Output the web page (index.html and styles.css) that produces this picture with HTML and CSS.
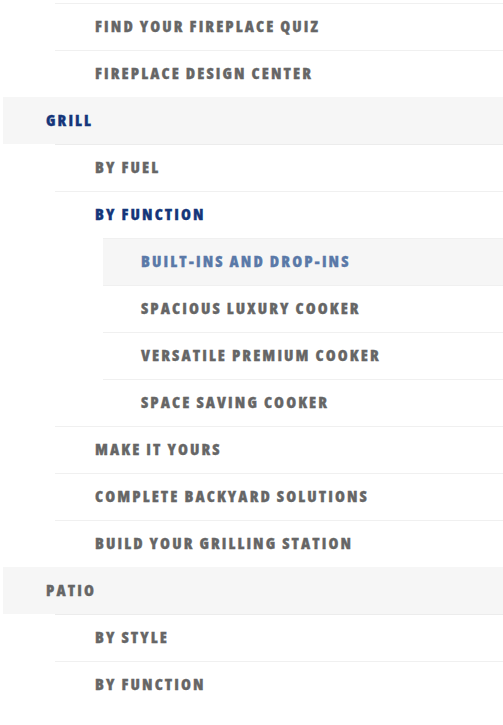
FILE: index.html
```html
<!DOCTYPE html>
<html>
<head>
<meta charset="utf-8">
<link rel="stylesheet" href="styles.css">
</head>
<body>
<nav class="menu">
  <ul class="lvl2 first">
    <li><a href="#">Find Your Fireplace Quiz</a></li>
    <li><a href="#">Fireplace Design Center</a></li>
  </ul>
  <ul class="lvl1">
    <li>
      <a href="#" class="top active">Grill</a>
      <ul class="lvl2">
        <li><a href="#">By Fuel</a></li>
        <li>
          <a href="#" class="active">By Function</a>
          <ul class="lvl3">
            <li><a href="#" class="current">Built-Ins and Drop-Ins</a></li>
            <li><a href="#">Spacious Luxury Cooker</a></li>
            <li><a href="#">Versatile Premium Cooker</a></li>
            <li><a href="#">Space Saving Cooker</a></li>
          </ul>
        </li>
        <li><a href="#">Make It Yours</a></li>
        <li><a href="#">Complete Backyard Solutions</a></li>
        <li><a href="#">Build Your Grilling Station</a></li>
      </ul>
    </li>
    <li>
      <a href="#" class="top">Patio</a>
      <ul class="lvl2">
        <li><a href="#">By Style</a></li>
        <li><a href="#">By Function</a></li>
      </ul>
    </li>
  </ul>
</nav>
</body>
</html>
```
FILE: styles.css
```css
html, body {
  margin: 0;
  padding: 0;
  background: #fff;
}
body {
  padding: 3px 0 0 3px;
  font-family: "Open Sans", "DejaVu Sans Condensed", sans-serif;
}
ul {
  list-style: none;
  margin: 0;
  padding: 0;
}
a {
  display: block;
  height: 46px;
  line-height: 44px;
  border-top: 1px solid #f0f0f0;
  color: #666;
  text-decoration: none;
  text-transform: uppercase;
  font-weight: 800;
  font-stretch: 75%;
  font-size: 16px;
  letter-spacing: 2.1px;
  -webkit-text-stroke: 0.3px currentColor;
  white-space: nowrap;
}
.lvl2 {
  margin-left: 52px;
}
.lvl2 a {
  padding-left: 40px;
}
.lvl3 {
  margin-left: 48px;
}
.lvl3 a {
  padding-left: 38px;
}
.top {
  padding-left: 43px;
  background: #f6f6f6;
  border-top-color: #f6f6f6;
}
.lvl1 > li > .lvl2 > li:first-child > a {
  border-top-color: #ececec;
}
a.active {
  color: #15367a;
}
a.current {
  color: #5a79a8;
  background: #f6f6f6;
}
```
